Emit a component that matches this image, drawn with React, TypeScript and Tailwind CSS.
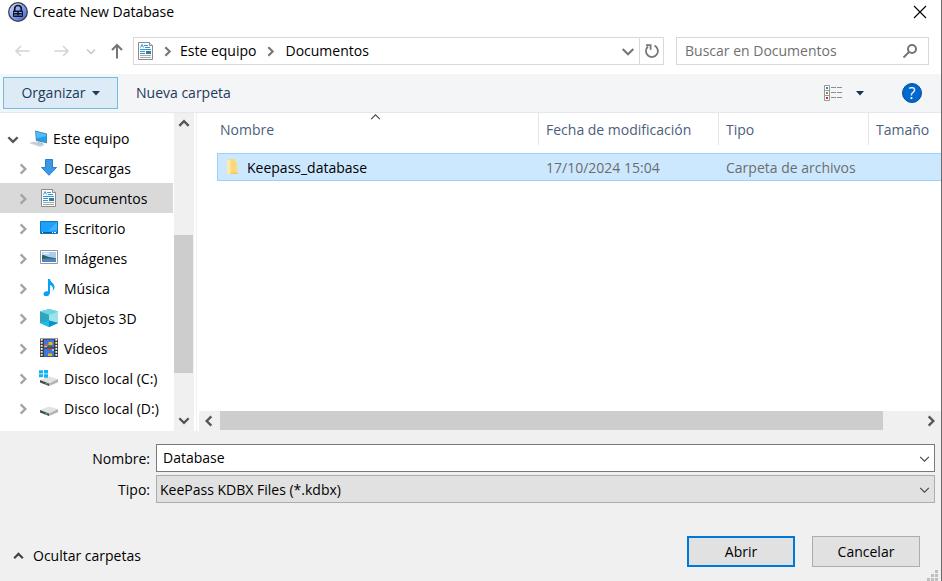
import type { ReactNode } from "react";

type Dir = "up" | "down" | "left" | "right";

const chevronPaths: Record<Dir, string> = {
  up: "M2 8.5 6 4.5l4 4",
  down: "M2 4.5l4 4 4-4",
  left: "M8 2 4 6l4 4",
  right: "M4 2l4 4-4 4",
};

function Chevron({ dir, className, width = 2, size = 12 }: { dir: Dir; className?: string; width?: number; size?: number }) {
  return (
    <svg width={size} height={size} viewBox="0 0 12 12" fill="none" stroke="currentColor" strokeWidth={width} className={`shrink-0 ${className ?? ""}`} aria-hidden="true">
      <path d={chevronPaths[dir]} />
    </svg>
  );
}

function Icon({ children }: { children: ReactNode }) {
  return (
    <svg width="20" height="20" viewBox="0 0 20 20" className="shrink-0" aria-hidden="true">
      {children}
    </svg>
  );
}

function LockLogo() {
  return (
    <svg width="20" height="20" viewBox="0 0 20 20" className="shrink-0" aria-hidden="true">
      <defs>
        <linearGradient id="lock" x1="0" y1="0" x2="1" y2="1">
          <stop offset="0" stopColor="#dbe4fb" />
          <stop offset=".55" stopColor="#7d9bea" />
          <stop offset="1" stopColor="#3559cf" />
        </linearGradient>
      </defs>
      <circle cx="10" cy="10" r="9.3" fill="url(#lock)" stroke="#3b3f4a" strokeWidth="1.3" />
      <path d="M6.7 9V6.8a3.3 3.3 0 0 1 6.6 0V9" fill="none" stroke="#10142b" strokeWidth="1.7" />
      <rect x="5" y="8.6" width="10" height="6.4" rx=".8" fill="#10142b" />
      <path d="M6 10.5h8M6 13h8" stroke="#9db4f0" strokeWidth=".9" />
      <path d="M10 10v3.4" stroke="#10142b" strokeWidth="1.6" />
    </svg>
  );
}

function DocumentIcon() {
  return (
    <Icon>
      <path d="M2.5 1.5h11l3 3v14h-14z" fill="#fcfcfc" stroke="#8b8b8b" />
      <path d="M13.5 1.5v3h3" fill="#e5e5e5" stroke="#8b8b8b" />
      <path d="m4.500 6.500 1.500-3 1.500 3M8 4.500h4M9 6.500h5" fill="none" stroke="#3198dc" />
      <path d="M4 8.500h11M4 10.500h5M4 12.500h5" stroke="#3198dc" />
      <path d="M10 10h5v3h-5z" fill="#347d9c" />
      <path d="M4 14.500h11M4 16.500h11" stroke="#a6a6a6" />
    </Icon>
  );
}

function ComputerIcon() {
  return (
    <Icon>
      <path d="m6 1.5 12 3v9.8L7 12z" fill="#4a87b7" />
      <path d="m7 2.7 10 2.5v7.9L8 11z" fill="#249fef" />
      <path d="m7 2.7 10 2.5v2L7.6 9z" fill="#55baf8" />
      <path d="m9 13 5 1-1 2-5-1z" fill="#aab7c1" />
      <path d="m1 14 4-1.2 10 3-4 1.7z" fill="#d7dce1" stroke="#b9c1c8" strokeWidth=".5" />
      <path d="m3.5 14 8.5 2.4M5 13.6l8.5 2.4" stroke="#aab2b9" strokeWidth=".4" />
    </Icon>
  );
}

function DownloadIcon() {
  return (
    <Icon>
      <path d="M6.5 1.5h7v8h4L10 17.3 2.5 9.500h4z" fill="#3b98e7" stroke="#2880cd" />
    </Icon>
  );
}

function DesktopIcon() {
  return (
    <Icon>
      <path d="M1.500 3.500h17v12h-17z" fill="#1ba1fb" stroke="#1377bd" />
      <path d="M18 4v8L9 13z" fill="#41b3fc" />
      <path d="M2 14.500h16" stroke="#0e5d99" />
      <path d="M3 14.500h1M13 14.500h1M15 14.500h2" stroke="#fff" />
    </Icon>
  );
}

function PictureIcon() {
  return (
    <Icon>
      <path d="M1.500 2.500h17v13h-17z" fill="#fff" stroke="#979797" />
      <path d="M3 4h14v10H3z" fill="#a9cdf1" />
      <path d="M3 7c3 0 5 2 8 2.300l6 1V12H3z" fill="#2f5d62" />
      <path d="M3 11c5-1 9 0 14-.5V14H3z" fill="#4c87bf" />
      <path d="M4 5.500h6" stroke="#e8f3fd" strokeWidth="1.5" />
    </Icon>
  );
}

function MusicIcon() {
  return (
    <Icon>
      <path d="M9 1h2c.3 3.6 4.8 4.2 4.5 8.2-.1 1.600-.8 2.600-1.800 3.600.9-3.100-.2-5-2.700-5.800v7.600c0 2.400-1.800 3.600-3.800 3.600-1.700 0-2.700-1-2.700-2.300 0-2 2.200-3.200 4.500-2.600z" fill="#0c9df5" />
    </Icon>
  );
}

function CubeIcon() {
  return (
    <Icon>
      <path d="m1 3.500 9-2.500 9 2.500v11.500L10 19l-9-4z" fill="#42bfd8" />
      <path d="m1 3.500 9-2.500 9 2.500L10 7z" fill="#6fd3e2" />
      <path d="m1 3.500 9 3.500v6l-9 2z" fill="#2fa5bf" />
      <path d="m19 3.500-9 3.500v6l9 2z" fill="#9be4ec" />
      <path d="m1 15 9-2.500 9 2.500-9 4z" fill="#12c0ee" />
      <path d="m10 12.500 9 2.500-9 4z" fill="#0b8fc9" />
    </Icon>
  );
}

function FilmIcon() {
  return (
    <Icon>
      <path d="M1 .5h18v18.500H1z" fill="#3c3c3c" />
      <path d="M2.700 1v17.500M17.300 1v17.500" stroke="#f4f4f4" strokeWidth="1.8" strokeDasharray="1.8 1.200" />
      <path d="M5 1.500h10V9.300H5zM5 10.500h10v8H5z" fill="#3f77d8" />
      <path d="M9.500 4h4v3h-4z" fill="#f0b323" />
      <path d="M6 6h3v2H6z" fill="#e0564a" />
      <path d="M9 7.500h4v1.800H9z" fill="#2f7a35" />
      <path d="M5 8h3v1.300H5zM13 11h2v2h-2z" fill="#8fc7f5" />
      <path d="M9 10.500h3V12H9z" fill="#da3d32" />
      <path d="M9 15.500h4V18H9z" fill="#f0b323" />
    </Icon>
  );
}

function DriveIcon({ windows = false }: { windows?: boolean }) {
  return (
    <Icon>
      <path d="m1 12 9-3.500 9 2.500-9 4.500z" fill="#e2e2e3" />
      <path d="m10 15.500 9-4.500v3.200L10 18z" fill="#b3b4b6" />
      <path d="m1 12 9 3.500V18l-9-3.400z" fill="#48494b" />
      <path d="M6.500 15.200h2v1.200h-2z" fill="#3fd65c" />
      {windows && (
        <>
          <path d="M0 1.500h9.500V10H0z" fill="#fff" />
          <path d="M0 2.300h4v3.200H0zM5 2h4v3.500H5zM0 6.300h4v3H0zM5 6.300h4v3.500H5z" fill="#12b3f2" />
        </>
      )}
    </Icon>
  );
}

function FolderIcon() {
  return (
    <Icon>
      <path d="M4 1h8v3h2v12H6z" fill="#fbd978" />
      <path d="m4 1 3.500 2v14L4 15z" fill="#fdeab0" />
      <path d="M7.500 14.500H15v1.500H7.500z" fill="#f4c95b" />
    </Icon>
  );
}

const places = [
  { name: "Descargas", icon: <DownloadIcon /> },
  { name: "Documentos", icon: <DocumentIcon />, selected: true },
  { name: "Escritorio", icon: <DesktopIcon /> },
  { name: "Imágenes", icon: <PictureIcon /> },
  { name: "Música", icon: <MusicIcon /> },
  { name: "Objetos 3D", icon: <CubeIcon /> },
  { name: "Vídeos", icon: <FilmIcon /> },
  { name: "Disco local (C:)", icon: <DriveIcon windows /> },
  { name: "Disco local (D:)", icon: <DriveIcon /> },
];

function TitleBar() {
  return (
    <header className="flex h-[23px] items-center gap-1 pl-2 pr-[13px]">
      <LockLogo />
      <h1 className="flex-1 pl-px">Create New Database</h1>
      <button aria-label="Cerrar" className="p-px">
        <svg width="14" height="14" viewBox="0 0 14 14" stroke="#000" strokeWidth="1.1" aria-hidden="true">
          <path d="m1 1 12 12M13 1 1 13" />
        </svg>
      </button>
    </header>
  );
}

function Arrow({ className, path }: { className: string; path: string }) {
  return (
    <svg width="16" height="16" viewBox="0 0 16 16" fill="none" stroke="currentColor" className={className} aria-hidden="true">
      <path d={path} />
    </svg>
  );
}

function NavigationBar() {
  return (
    <nav className="flex h-[51px] items-center pl-[14px] pr-3 pt-[5px]">
      <button aria-label="Atrás">
        <Arrow className="stroke-[1.5] text-[#d4d4d4]" path="M15.500 8H2M7 3 2 8l5 5" />
      </button>
      <button aria-label="Adelante" className="ml-6">
        <Arrow className="stroke-[1.5] text-[#d4d4d4]" path="M.5 8H14M9 3l5 5-5 5" />
      </button>
      <button aria-label="Ubicaciones recientes" className="ml-[15px]">
        <Chevron dir="down" className="text-[#c4c4c4]" width={1.5} />
      </button>
      <button aria-label="Subir" className="ml-3">
        <Arrow className="stroke-2 text-[#757575]" path="M8 15.500V2M3 7l5-5 5 5" />
      </button>
      <div className="ml-2 flex h-7 flex-1 items-center border border-[#d9d9d9] pl-0.5">
        <DocumentIcon />
        <Chevron dir="right" className="ml-[5px] text-[#777]" size={13} />
        <button className="ml-1.5">Este equipo</button>
        <Chevron dir="right" className="ml-2 text-[#777]" size={13} />
        <button className="ml-2 flex-1 text-left">Documentos</button>
        <button aria-label="Ubicaciones anteriores" className="mr-[3px]">
          <Chevron dir="down" className="text-[#777]" size={16} width={1.6} />
        </button>
        <button aria-label="Actualizar" className="flex h-full w-6 items-center justify-center border-l border-[#d9d9d9]">
          <svg width="16" height="16" viewBox="0 0 16 16" fill="none" stroke="#777" strokeWidth="1.8" aria-hidden="true">
            <path d="M10.500 2.600A6 6 0 1 1 4 3.500M2 2.200h4.600v4.500" />
          </svg>
        </button>
      </div>
      <div className="ml-3 flex h-7 w-[253px] items-center border border-[#d9d9d9] pl-2 pr-2.5">
        <input aria-label="Buscar en Documentos" placeholder="Buscar en Documentos" className="min-w-0 flex-1 bg-transparent outline-none placeholder:text-[#707070]" />
        <svg width="16" height="16" viewBox="0 0 16 16" fill="none" stroke="#757575" strokeWidth="2" aria-hidden="true">
          <circle cx="10" cy="6" r="4" />
          <path d="m7 9-5.500 5.500" />
        </svg>
      </div>
    </nav>
  );
}

function Toolbar() {
  return (
    <div className="flex h-[39px] items-center border-b border-[#e6e7e8] bg-[#f4f5f7] pl-[3px] pr-[19px] text-[#1e395b]">
      <button className="flex h-8 w-[115px] items-center justify-center gap-1.5 border border-[#70bde3] bg-[#dcebf5]">
        Organizar
        <svg width="8" height="5" viewBox="0 0 8 5" fill="currentColor" aria-hidden="true">
          <path d="M0 0h8L4 4.500z" />
        </svg>
      </button>
      <button className="ml-[18px]">Nueva carpeta</button>
      <button aria-label="Cambiar la vista" className="ml-auto flex items-center gap-3">
        <svg width="20" height="16" viewBox="0 0 20 16" fill="none" aria-hidden="true">
          <path d="M.5.5h5v15h-5zM.5 5.500h5M.5 10.500h5" fill="#fff" stroke="#999" />
          <path d="M7 2.500h5M13 2.500h5M7 7.500h5M13 7.500h5M7 12.500h5M13 12.500h5" stroke="#8c8c8c" />
          <path d="M2 2h2v2H2z" fill="#2d8fa3" />
          <path d="M2 7h2v2H2z" fill="#938b28" />
          <path d="M2 12h2v2H2z" fill="#c8361f" />
        </svg>
        <svg width="8" height="5" viewBox="0 0 8 5" fill="#16325c" aria-hidden="true">
          <path d="M0 0h8L4 4.500z" />
        </svg>
      </button>
      <button aria-label="Ayuda" className="ml-[38px] flex size-5 items-center justify-center rounded-full border border-[#00509c] bg-[#0067cc] text-base font-medium leading-none text-white">
        ?
      </button>
    </div>
  );
}

function Sidebar() {
  return (
    <aside className="flex w-[197px] shrink-0 border-r border-[#f0f0f0]">
      <div className="min-w-0 flex-1 pt-[10px]">
        <button className="flex h-[30px] w-full items-center pl-1.5 pt-px">
          <Chevron dir="down" className="text-[#555]" size={14} />
          <span className="ml-[9px]"><ComputerIcon /></span>
          <span className="ml-1">Este equipo</span>
        </button>
        <ul>
          {places.map((place) => (
            <li key={place.name} className="pr-px">
              <button className={`flex h-[30px] w-full items-center whitespace-nowrap pl-4 pt-0.5 ${place.selected ? "bg-[#d9d9d9]" : ""}`}>
                <Chevron dir="right" className="text-[#a3a3a3]" size={14} />
                <span className="-mt-0.5 ml-[9px]">{place.icon}</span>
                <span className="ml-[5px]">{place.name}</span>
              </button>
            </li>
          ))}
        </ul>
      </div>
      <div className="mr-[2px] flex w-5 flex-col bg-[#f0f0f0] text-[#555]">
        <button aria-label="Desplazar arriba" className="flex h-5 items-center justify-center pr-px"><Chevron dir="up" size={14} /></button>
        <div className="flex-102" />
        <div className="mr-px flex-138 bg-[#cdcdcd]" />
        <div className="flex-38" />
        <button aria-label="Desplazar abajo" className="flex h-5 items-center justify-center pb-0.5 pr-px"><Chevron dir="down" size={14} /></button>
      </div>
    </aside>
  );
}

function HeaderCell({ children, className, sorted }: { children: ReactNode; className: string; sorted?: boolean }) {
  return (
    <th scope="col" className={`h-10 p-0 text-left align-top font-normal ${className}`}>
      <div className={`relative flex h-8 items-center border-r border-[#e5e5e5] pt-0.5 text-[#4c607a] ${sorted ? "pl-[3px]" : "pl-[7px]"}`}>
        {children}
        {sorted && (
          <span className="absolute left-0 right-1 top-[-3px] flex justify-center">
            <Chevron dir="up" width={1} size={13} className="text-[#444]" />
          </span>
        )}
      </div>
    </th>
  );
}

function FileList() {
  return (
    <section className="flex min-w-0 flex-1 flex-col">
      <div className="flex-1 overflow-hidden pl-5">
        <table className="w-full table-fixed border-separate border-spacing-0 whitespace-nowrap">
          <thead>
            <tr>
              <HeaderCell className="w-[322px]" sorted>Nombre</HeaderCell>
              <HeaderCell className="w-[180px]">Fecha de modificación</HeaderCell>
              <HeaderCell className="w-[150px]">Tipo</HeaderCell>
              <th scope="col" className="p-0 text-left align-top font-normal text-[#4c607a]">
                <div className="flex h-8 items-center pl-[7px] pt-0.5">Tamaño</div>
              </th>
            </tr>
          </thead>
          <tbody>
            <tr className="h-7 bg-[#cce8ff] text-[#6d6d6d] [&>td]:border-y [&>td]:border-[#99d1ff] [&>td]:px-0 [&>td]:pb-0 [&>td]:pt-0.5">
              <td className="border-l text-black">
                <div className="flex items-center gap-1 pl-[5px]"><FolderIcon />Keepass_database</div>
              </td>
              <td><div className="pl-[7px]">17/10/2024 15:04</div></td>
              <td><div className="pl-[7px]">Carpeta de archivos</div></td>
              <td />
            </tr>
          </tbody>
        </table>
      </div>
      <div className="ml-0.5 flex h-5 items-stretch bg-[#f0f0f0] text-[#555]">
        <button aria-label="Desplazar a la izquierda" className="flex w-[21px] items-center justify-center pr-0.5"><Chevron dir="left" size={14} /></button>
        <div className="mb-px flex-663 bg-[#cdcdcd]" />
        <div className="flex-37" />
        <button aria-label="Desplazar a la derecha" className="flex w-[21px] items-center justify-center"><Chevron dir="right" size={14} /></button>
      </div>
    </section>
  );
}

function Footer() {
  return (
    <footer className="relative bg-[#f0f0f0] pb-[14px] pt-[13px]">
      <div className="grid grid-cols-[150px_1fr] items-center gap-x-1.5 gap-y-[3px] pr-1.5">
        <label htmlFor="filename" className="pt-0.5 text-right">Nombre:</label>
        <div className="flex h-7 items-center border border-[#7a7a7a] bg-white pl-1.5 pr-[3px]">
          <input id="filename" defaultValue="Database" className="min-w-0 flex-1 bg-transparent outline-none" />
          <button aria-label="Nombres anteriores"><Chevron dir="down" width={1} size={13} className="text-[#444]" /></button>
        </div>
        <label htmlFor="filetype" className="pt-0.5 text-right">Tipo:</label>
        <div className="relative">
          <select id="filetype" className="block h-7 w-full appearance-none border border-[#adadad] bg-[#e1e1e1] pl-[3px] pr-6 pt-px outline-none">
            <option>KeePass KDBX Files (*.kdbx)</option>
          </select>
          <Chevron dir="down" width={1} size={13} className="pointer-events-none absolute right-1 top-2 text-[#444]" />
        </div>
      </div>
      <div className="mt-[33px] flex items-center pl-3 pr-[21px]">
        <button className="mt-2 flex items-center gap-2"><Chevron dir="up" className="text-[#444]" size={13} />Ocultar carpetas</button>
        <button className="ml-auto h-[31px] w-[108px] border-2 border-[#0078d7] bg-[#e1e1e1]">Abrir</button>
        <button className="ml-[17px] h-[31px] w-[108px] border border-[#adadad] bg-[#e1e1e1]">Cancelar</button>
      </div>
      <svg width="11" height="11" viewBox="0 0 11 11" fill="#bfbfbf" className="absolute bottom-0 right-[3px]" aria-hidden="true">
        <path d="M8 0h3v3H8zM4 4h3v3H4zM8 4h3v3H8zM0 8h3v3H0zM4 8h3v3H4zM8 8h3v3H8z" />
      </svg>
    </footer>
  );
}

export default function App() {
  return (
    <main className="flex min-h-screen flex-col border-r border-[#6b6b6b] bg-white font-['Open_Sans',sans-serif] text-sm text-black">
      <TitleBar />
      <NavigationBar />
      <Toolbar />
      <div className="flex flex-1">
        <Sidebar />
        <FileList />
      </div>
      <Footer />
    </main>
  );
}
